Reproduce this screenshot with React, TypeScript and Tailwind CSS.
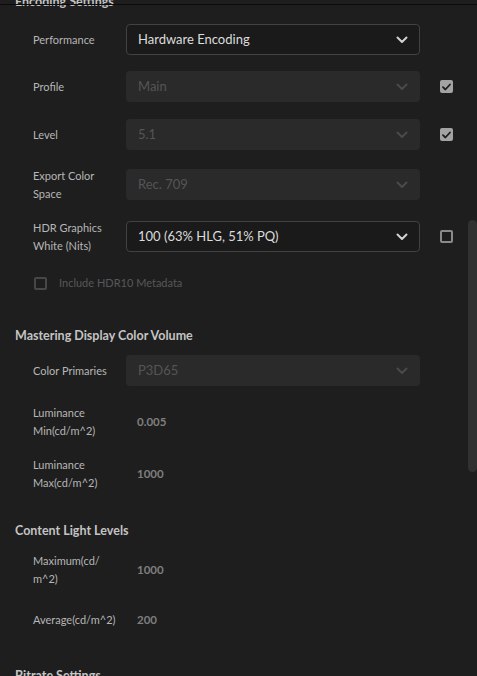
import React from "react";

const font = { fontFamily: "Lato, 'Open Sans', sans-serif" };

function Chevron({ dim }: { dim?: boolean }) {
  return (
    <svg width="12" height="8" viewBox="0 0 12 8" className="shrink-0">
      <path
        d="M1.5 1.5 L6 6 L10.5 1.5"
        fill="none"
        stroke={dim ? "#4a4a4a" : "#d2d2d2"}
        strokeWidth="2"
        strokeLinecap="round"
        strokeLinejoin="round"
      />
    </svg>
  );
}

function Select({ value, disabled }: { value: string; disabled?: boolean }) {
  return (
    <div
      className={
        disabled
          ? "flex h-[31px] w-[294px] shrink-0 items-center justify-between rounded-[4px] bg-[#2a2a2a] pl-3 pr-3 text-[13px] text-[#555555]"
          : "flex h-[31px] w-[294px] shrink-0 items-center justify-between rounded-[4px] border border-[#424242] bg-[#1a1a1a] pl-[11px] pr-[11px] text-[13px] text-[#dcdcdc]"
      }
    >
      <span>{value}</span>
      <Chevron dim={disabled} />
    </div>
  );
}

function Check({ checked }: { checked?: boolean }) {
  if (checked) {
    return (
      <div className="flex h-[13px] w-[13px] items-center justify-center rounded-[2px] bg-[#a3a3a3]">
        <svg width="9" height="8" viewBox="0 0 9 8">
          <path
            d="M1 4.2 L3.4 6.5 L8 1.5"
            fill="none"
            stroke="#1e1e1e"
            strokeWidth="1.8"
            strokeLinecap="round"
            strokeLinejoin="round"
          />
        </svg>
      </div>
    );
  }
  return <div className="h-[13px] w-[13px] rounded-[2px] border-2 border-[#8a8a8a]" />;
}

function Row({
  label,
  className,
  children,
  check,
}: {
  label: React.ReactNode;
  className: string;
  children: React.ReactNode;
  check?: "on" | "off";
}) {
  return (
    <div className={"flex items-center " + className}>
      <div className="ml-[33px] mr-[11px] w-[82px] shrink-0 text-[11px] leading-[18px] text-[#b6b6b6]">
        {label}
      </div>
      {children}
      {check ? (
        <div className="ml-[20px]">
          <Check checked={check === "on"} />
        </div>
      ) : null}
    </div>
  );
}

function Heading({ text, className }: { text: string; className: string }) {
  return (
    <div className={"ml-[15px] h-[18px] text-[12.5px] font-bold leading-[18px] text-[#c4c4c4] " + className}>
      {text}
    </div>
  );
}

function Value({ text }: { text: string }) {
  return <div className="pl-[11px] text-[11.5px] font-bold text-[#7e7e7e]">{text}</div>;
}

export default function App() {
  return (
    <div className="relative h-[676px] w-[477px] overflow-hidden bg-[#1e1e1e]" style={font}>
      <Heading text="Encoding Settings" className="mt-[-7px]" />
      <Row label="Performance" className="mt-[13px] h-[31px]">
        <Select value="Hardware Encoding" />
      </Row>
      <Row label="Profile" className="mt-[16px] h-[31px]" check="on">
        <Select value="Main" disabled />
      </Row>
      <Row label="Level" className="mt-[17px] h-[31px]" check="on">
        <Select value="5.1" disabled />
      </Row>
      <Row label="Export Color Space" className="mt-[19px] h-[31px]">
        <Select value="Rec. 709" disabled />
      </Row>
      <Row label="HDR Graphics White (Nits)" className="mt-[21px] h-[31px]" check="off">
        <Select value="100 (63% HLG, 51% PQ)" />
      </Row>
      <div className="mt-[22px] flex h-[18px] items-center">
        <div className="ml-[34px] h-[13px] w-[13px] rounded-[2px] border-2 border-[#474747]" />
        <span className="ml-[12px] text-[11px] text-[#585858]">Include HDR10 Metadata</span>
      </div>

      <Heading text="Mastering Display Color Volume" className="mt-[35px]" />
      <Row label="Color Primaries" className="mt-[10px] h-[31px]">
        <Select value="P3D65" disabled />
      </Row>
      <Row label="Luminance Min(cd/m^2)" className="mt-[18px] h-[36px]">
        <Value text="0.005" />
      </Row>
      <Row label="Luminance Max(cd/m^2)" className="mt-[16px] h-[36px]">
        <Value text="1000" />
      </Row>

      <Heading text="Content Light Levels" className="mt-[30px]" />
      <Row
        label={
          <>
            Maximum(cd/
            <br />
            m^2)
          </>
        }
        className="mt-[12px] h-[36px]"
      >
        <Value text="1000" />
      </Row>
      <Row label="Average(cd/m^2)" className="mt-[23px] h-[18px]">
        <Value text="200" />
      </Row>

      <Heading text="Bitrate Settings" className="mt-[38px]" />

      <div className="absolute left-0 right-0 top-[4px] h-px bg-[#0c0c0c]" />
      <div className="absolute right-0 top-[220px] h-[252px] w-[9px] rounded-[5px] bg-[#313131]" />
    </div>
  );
}
